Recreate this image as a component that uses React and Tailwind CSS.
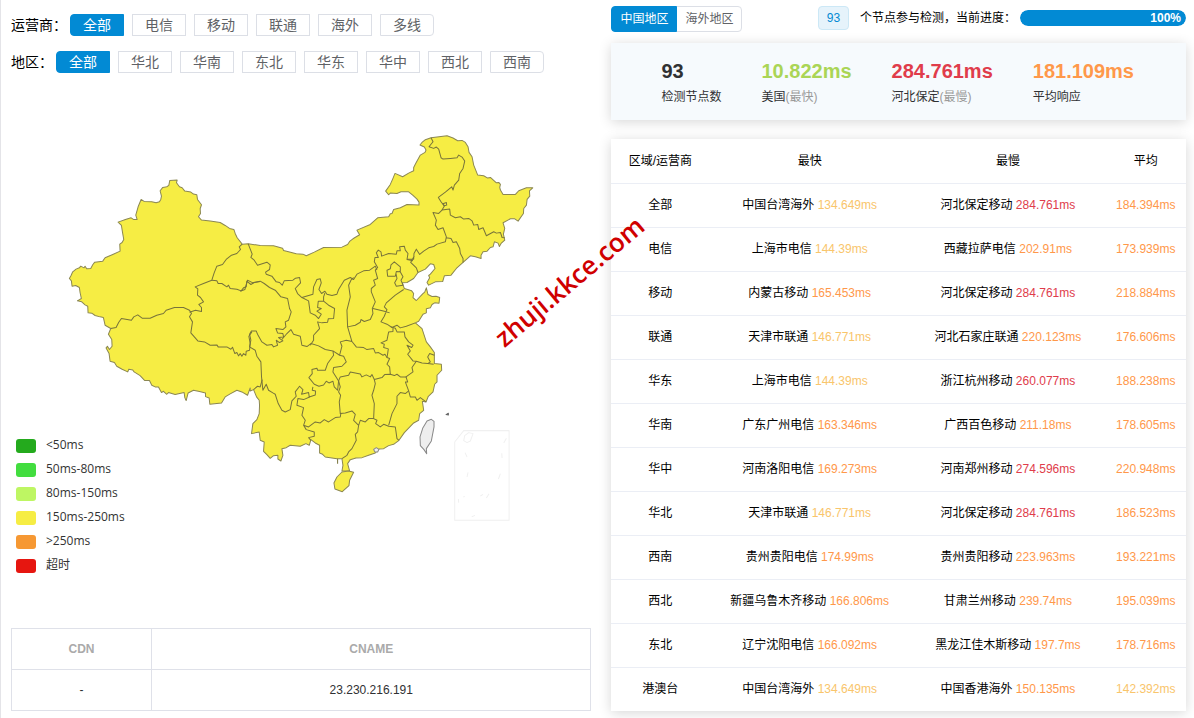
import { useState } from 'react';
import clsx from 'clsx';

const carriers = ['全部', '电信', '移动', '联通', '海外', '多线'];
const areas = ['全部', '华北', '华南', '东北', '华东', '华中', '西北', '西南'];

const legend = [
  { label: '<50ms', color: 'bg-[#24aa1d]' },
  { label: '50ms-80ms', color: 'bg-[#42dd3f]' },
  { label: '80ms-150ms', color: 'bg-[#bef663]' },
  { label: '150ms-250ms', color: 'bg-[#f6ed44]' },
  { label: '>250ms', color: 'bg-[#f69833]' },
  { label: '超时', color: 'bg-[#e61610]' },
];

const stats = [
  { value: '93', label: '检测节点数', color: 'text-[#303133]' },
  { value: '10.822ms', label: '美国', note: '(最快)', color: 'text-[#aad556]' },
  { value: '284.761ms', label: '河北保定', note: '(最慢)', color: 'text-[#e03c4b]' },
  { value: '181.109ms', label: '平均响应', color: 'text-[#ff984a]' },
];

const rows = [
  { name: '全部', fast: ['中国台湾海外', 134.649], slow: ['河北保定移动', 284.761], avg: 184.394 },
  { name: '电信', fast: ['上海市电信', 144.39], slow: ['西藏拉萨电信', 202.91], avg: 173.939 },
  { name: '移动', fast: ['内蒙古移动', 165.453], slow: ['河北保定移动', 284.761], avg: 218.884 },
  { name: '联通', fast: ['天津市联通', 146.771], slow: ['河北石家庄联通', 220.123], avg: 176.606 },
  { name: '华东', fast: ['上海市电信', 144.39], slow: ['浙江杭州移动', 260.077], avg: 188.238 },
  { name: '华南', fast: ['广东广州电信', 163.346], slow: ['广西百色移动', 211.18], avg: 178.605 },
  { name: '华中', fast: ['河南洛阳电信', 169.273], slow: ['河南郑州移动', 274.596], avg: 220.948 },
  { name: '华北', fast: ['天津市联通', 146.771], slow: ['河北保定移动', 284.761], avg: 186.523 },
  { name: '西南', fast: ['贵州贵阳电信', 174.99], slow: ['贵州贵阳移动', 223.963], avg: 193.221 },
  { name: '西北', fast: ['新疆乌鲁木齐移动', 166.806], slow: ['甘肃兰州移动', 239.74], avg: 195.039 },
  { name: '东北', fast: ['辽宁沈阳电信', 166.092], slow: ['黑龙江佳木斯移动', 197.7], avg: 178.716 },
  { name: '港澳台', fast: ['中国台湾海外', 134.649], slow: ['中国香港海外', 150.135], avg: 142.392 },
];

// Text color by response time
const getColor = (ms) => {
  if (ms < 150) return 'text-[#f9c56b]';
  if (ms < 250) return 'text-[#ff984a]';
  return 'text-[#e03c4b]';
};

function FilterRow({ title, options }) {
  const [active, setActive] = useState(options[0]);

  return (
    <div className="flex items-center gap-[3px]">
      <span className="text-sm leading-[22px] text-black">{title}：</span>
      <div className="flex gap-2">
        {options.map((option) => (
          <button
            key={option}
            type="button"
            onClick={() => setActive(option)}
            className={clsx(
              'h-[22px] w-[54px] border text-sm leading-5 first:rounded-l last:rounded-r',
              option === active
                ? 'border-[#028ad4] bg-[#028ad4] text-white'
                : 'border-[#dcdfe6] bg-white text-[#606266]'
            )}
          >
            {option}
          </button>
        ))}
      </div>
    </div>
  );
}

function ChinaMap() {
  return (
    <svg viewBox="33 219 1740 1665" className="w-full" role="img" aria-label="中国地图" strokeLinejoin="round">
      {/* Mainland outline */}
      <path
        fill="#f6ed44"
        stroke="#8b8752"
        strokeWidth="3"
        d="M208 835 213 826 218 815 228 807 238 803 242 798 252 803 255 798 260 806 272 805 278 794 284 786 308 783 315 773 338 763 360 753 359 732 366 727 371 718 367 695 364 676 354 666 376 658 393 653 400 658 411 658 407 645 414 620 423 598 432 604 455 605 468 608 478 605 482 598 484 588 480 572 488 562 500 560 506 556 509 541 531 540 529 548 538 560 546 563 554 573 572 576 580 582 590 584 592 598 604 614 600 626 601 640 595 650 604 660 630 663 660 667 675 676 688 685 701 688 705 700 711 713 726 732 744 731 780 736 820 737 847 744 850 751 865 755 888 761 908 762 918 767 942 756 970 742 1025 741 1042 733 1048 724 1058 716 1078 704 1070 690
        1110 673 1132 653 1165 650 1170 641 1175 640 1180 628 1200 623 1220 613 1256 615 1256 606 1250 597 1238 586 1225 575 1202 575 1190 580 1170 579 1165 584 1156 573 1170 553 1177 537 1184 520 1207 530 1225 519 1240 512 1240 502 1246 490 1260 465 1274 457 1277 450 1272 441 1259 435 1266 426 1275 419 1292 413 1340 407 1358 414 1372 422 1385 421 1395 427 1403 440 1406 457 1415 470 1420 495 1432 525 1450 527 1462 534 1470 532 1488 548 1495 547 1500 553 1498 562 1500 570 1508 583 1545 583 1555 572 1578 563 1597 563 1587 572 1588 588 1580 598 1578 615 1570 625 1569 640 1553 663 1543 656 1530 656 1508 668 1513 685 1509 702 1513 720 1502 730 1497 739 1493 729 1482 725 1478 740 1470 742 1460 753 1448 755 1442 765 1442 775 1425 770 1410 767 1400 776 1388 787 1368 805 1352 825 1332 827 1327 844 1305 845 1285 855 1280 847 1288 833 1285 826 1290 822 1304 805 1300 793 1290 791 1275 807 1253 817 1240 835 1220 847 1206 848 1212 865 1234 872 1240 880 1238 892 1248 901 1267 881 1273 876 1278 863 1283 883 1295 889 1307 888 1318 892 1316 909 1303 908 1295 913 1290 923 1278 926 1278 938 1268 942 1255 963
        1245 968 1265 985 1278 1025 1290 1040 1302 1057 1302 1090 1323 1092 1324 1110 1310 1125 1310 1145 1303 1152 1298 1175 1284 1188 1277 1205 1266 1203 1270 1230 1258 1240 1255 1260 1240 1268 1230 1278 1212 1297 1196 1320 1180 1332 1165 1336 1150 1345 1136 1346 1125 1358 1105 1365 1085 1372 1067 1373 1050 1378 1042 1390 1048 1412 1025 1412 1028 1395 1025 1375 1010 1375 995 1373 975 1370 967 1362 958 1358 958 1335 945 1328 932 1318 927 1335 917 1330 900 1338 870 1335 858 1342 845 1345 848 1365 842 1382 833 1376 833 1365 820 1366 810 1374 800 1363 790 1353 792 1325 780 1320 777 1295 754 1300 758 1270 770 1258 777 1240 778 1215 777 1200 769 1190 765 1180 760 1168 750 1172
        750 1163 742 1185 725 1175 710 1170 690 1181 675 1190 664 1208 629 1212 627 1193 616 1189 616 1178 598 1174 580 1170 564 1178 558 1201 554 1192 552 1177 525 1183 505 1177 500 1182 490 1173 484 1177 475 1160 465 1160 455 1155 448 1141 434 1141 420 1126 402 1115 398 1109 386 1107 383 1115 366 1107 350 1098 343 1087 330 1083 327 1060 318 1043 322 1038 328 1048 336 1038 335 1018 325 1002 332 985 315 975 310 952 300 950 285 946 275 939 264 938 263 918 255 914 245 905 232 902 244 895 240 877 238 862 227 856 216 858 214 842Z"
      />

      <g fill="none" stroke="#77733a" strokeWidth="3">
        {/* Xinjiang, Tibet, Qinghai, Gansu */}
        <g transform="translate(180 510)">
          <path d="M546 222 537 230 541 238 530 250 514 255 498 268 487 283 470 288 462 308 455 330 430 340 405 350 413 356 412 375 421 382 430 395 416 403 424 412 424 424 406 420 388 426" />
          <path d="M152 475 168 472 176 456 184 445 214 450 221 440 233 434 246 444 270 444 290 435 310 430 318 420 343 412 370 412 388 420 394 430 388 440 397 455 392 488 413 512 433 515 450 525 470 524 474 530 500 530 512 537 517 531 524 550 530 547 535 557 540 550 545 558 550 550 557 555 558 543 568 540 570 520 566 498 575 485" />
          <path d="M455 330 470 332 474 340 485 340 500 350 505 345 510 355 530 357 543 362 550 353 558 350 560 333 572 343 582 337 600 334" />
        </g>

        {/* Northwest and central provinces down to the south coast */}
        <g transform="translate(720 690)">
          <path d="M24 41 36 72 32 82 42 90 52 105 80 96 90 104 88 118 76 126 78 132 95 138 108 155 118 157 126 165 132 152 158 150 166 144 178 142 181 158 165 175 172 190 185 202 218 192 220 170 230 148 240 146 243 158 236 178 244 190 254 183 260 192 275 196 290 192 295 178 312 150 330 142 340 148 350 132 370 122 388 120 405 108 410 120" />
          <path d="M185 202 205 212 210 248 225 255 235 265 243 252 230 243 243 235 232 232 234 213 250 213 250 200 254 188M250 213 265 225 283 235 280 265 264 266 262 276 245 278 232 275 238 295 220 315 220 330 210 345" />
          <path d="M0 183 14 178 22 150 38 158 60 153 72 160 88 172 105 180 122 200 142 205 148 235 153 245 145 270 135 275 137 290 128 298 107 295 112 308 128 310 130 320 115 322 128 332 118 337 108 330 112 345 100 350 95 343 80 345 65 335 52 312 48 302 34 302 28 312 32 330 28 350 45 360 50 378 62 395 64 440 68 480 78 462 85 480 98 488 105 492 114 520 125 540 135 545 150 538 155 512 168 498 165 485 178 468 188 478 184 492 205 487 207 500 225 494 226 482 216 480 218 470" />
          <path d="M125 328 140 310 152 298 160 312 180 318 185 345 200 349 212 340 235 347 255 358 278 362 280 375 262 400 255 420 232 420 230 414 215 418 216 430 206 442 222 462 236 468 250 464 258 453 266 458 278 453 282 470 292 480 295 452 278 425 280 412 305 408 318 395 310 378 298 375 278 362" />
          <path d="M66 448 60 470 52 468 40 478M298 375 305 348 300 335 318 330 335 334 M340 142 332 150 325 165 330 200 320 240 322 290 335 334 348 350 370 352 380 358 400 355 405 368 415 367 428 375 434 372 440 382 448 385 440 402 448 410 450 432" />
          <path d="M322 290 345 285 360 276 362 268 372 274 390 268 398 250 396 235 405 215 393 185 393 175 405 165 400 150 412 145 405 120 412 112 402 95 404 82 414 82 408 68 414 60 422 65 424 78 445 70 468 72 470 62 480 62 478 50 492 48 495 60 503 70 500 88 518 92" />
          <path d="M398 235 432 243 448 248M490 178 465 195 438 218 432 230 440 238 432 258 422 275 440 282 455 292 470 285 480 293 498 288 525 278M440 120 450 116 452 104 462 95 480 110 480 125 468 124 465 138 442 138ZM478 122 488 140 482 150 488 165 468 168 463 158 470 145 467 130" />
          <path d="M458 292 458 304 445 305 440 330 422 338 432 342 430 352 444 356 442 370 440 382M452 290 465 294 470 305 492 305 494 320 505 335 518 345 514 352 500 345 510 362 502 372 518 392 528 393 545 398 562 400 570 395 562 380 568 370 582 375M562 400 580 402M528 393 515 412 518 425 497 440 502 455 495 455 505 482 510 500 525 500 530 510 540 502 557 515" />
          <path d="M295 452 300 440 325 435 330 425 360 431 365 440 378 434 390 440 395 433 402 448 425 442 433 433 450 432 462 436 470 432 480 440 500 440M402 448 405 460 400 480 395 495 402 520 400 565M505 482 495 490 480 487 470 498 470 520 455 550 445 585" />
          <path d="M295 452 300 470 295 485 301 495 297 515 300 550 315 548 335 542 345 552 340 570 355 585 360 570 375 575 385 565 400 565 410 570 406 580 420 590 430 582 445 588 465 590 470 625 476 630" />
          <path d="M208 500 190 508 173 505 170 525 190 532 185 555 195 570 190 585 205 590 225 575 240 578 252 568 265 575 285 562 300 560 302 548M190 585 198 598 222 605 222 618 205 622 212 630M355 585 352 605 345 612 348 630 335 655 325 665 320 675 305 685M292 685 292 700" />
        </g>

        {/* Northeast */}
        <g transform="translate(1110 375)">
          <path d="M182 38 188 50 176 65 190 70 198 66 205 72 212 98 218 102 240 100 260 98 265 90 275 96 283 108 278 130 268 145 265 165 252 180 248 195 244 185 225 201 204 217 212 230 222 243 215 255 238 252 240 270 255 278 270 275 280 282 295 280 305 287 310 300 322 298 325 313 338 308 348 332 370 320 378 324 390 322 395 337 403 338" />
          <path d="M218 236 228 232 229 240 222 242ZM215 255 205 265 188 262 198 285 195 300 203 313 218 308 228 335 225 350 200 357 190 364 175 368 160 378 148 388 138 372 131 385 130 402 110 402M132 392 121 412 138 428 143 442M228 338 242 340 248 352 258 350 268 370 270 385 278 400 278 412" />
        </g>
      </g>

      {/* Hainan, Taiwan, Hong Kong */}
      <g stroke="#8b8752" strokeWidth="3">
        <path fill="#f6ed44" d="M1025 1415 1045 1412 1060 1416 1048 1440 1046 1456 1026 1474 1004 1466 1001 1448 1010 1430Z" />
        <path fill="#eee" stroke="#888" d="M1293 1257 1301 1263 1301 1280 1293 1322 1278 1345 1279 1360 1271 1348 1260 1336 1259 1310 1267 1284 1280 1262Z" />
        <path fill="#eee" stroke="#888" d="M1120 1347 1128 1342 1136 1347 1132 1355 1123 1354Z" />
        <path fill="#666" stroke="#666" d="M1337 1243 1344 1239 1344 1244Z" />
      </g>

      {/* South China Sea inset */}
      <g transform="translate(1200 1140)" fill="none" stroke="#f0f0f0" strokeWidth="3">
        <path d="M190 151H326V420H163V185Z" />
        <path d="M193 166 205 157 218 160 210 182 200 187 190 181ZM318 174 310 188M304 219 305 233M300 280 294 296M266 340 258 353M248 342 240 347M224 405 214 409M174 356 175 367M203 276 200 290M194 217 200 230M189 350 193 348" />
      </g>
    </svg>
  );
}

function Target({ item }) {
  const [name, ms] = item;
  return (
    <>
      {name} <span className={getColor(ms)}>{ms}ms</span>
    </>
  );
}

function LeftPanel() {
  return (
    <section className="px-2.5 pt-3.5">
      <div className="flex flex-col gap-[15px]">
        <FilterRow title="运营商" options={carriers} />
        <FilterRow title="地区" options={areas} />
      </div>

      <div className="relative">
        <ChinaMap />
        <ul className="absolute bottom-[50px] left-[5px] font-['Open_Sans','Noto_Sans_CJK_SC',sans-serif] text-xs text-[#333]">
          {legend.map((item) => (
            <li key={item.label} className="flex h-6 items-center gap-2.5">
              <span className={clsx('h-3.5 w-5 rounded-[3px]', item.color)} />
              <span className="pb-0.5">{item.label}</span>
            </li>
          ))}
        </ul>
      </div>

      <table className="w-full table-fixed border-collapse text-center text-xs">
        <thead>
          <tr className="h-[41px] text-[#aaa]">
            <th className="w-[140px] border border-[#dfe1e9] font-bold">CDN</th>
            <th className="border border-[#dfe1e9] font-bold">CNAME</th>
          </tr>
        </thead>
        <tbody>
          <tr className="h-[41px] text-[#303133]">
            <td className="border border-[#dfe1e9]">-</td>
            <td className="border border-[#dfe1e9]">23.230.216.191</td>
          </tr>
        </tbody>
      </table>
    </section>
  );
}

function RightPanel() {
  const [region, setRegion] = useState('中国地区');
  const progress = 100;

  return (
    <section className="pt-1.5 pr-2 pb-1.5 pl-2.5 text-xs">
      <div className="flex items-start">
        <div className="flex -space-x-px">
          {['中国地区', '海外地区'].map((name) => (
            <button
              key={name}
              type="button"
              onClick={() => setRegion(name)}
              className={clsx(
                'h-[26px] w-[66px] border first:rounded-l last:rounded-r',
                region === name
                  ? 'relative border-[#028ad4] bg-[#028ad4] text-white'
                  : 'border-[#dcdfe6] bg-white text-[#606266]'
              )}
            >
              {name}
            </button>
          ))}
        </div>
        <div className="ml-auto flex h-6 items-center">
          <span className="flex h-6 w-[31px] items-center justify-center rounded border border-[#cce8f6] bg-[#e6f3fb] text-[#028ad4]">
            93
          </span>
          <span className="ml-[11px] whitespace-nowrap text-black">个节点参与检测，当前进度：</span>
          <div className="ml-1 h-4 w-[166px] overflow-hidden rounded-full bg-[#ebeef5]">
            <div
              className="h-4 rounded-full bg-[#028ad4] pr-[5px] text-right leading-4 font-bold text-white"
              style={{ width: `${progress}%` }}
            >
              {progress}%
            </div>
          </div>
        </div>
      </div>

      <div className="mt-[11px] flex h-[77px] gap-10 bg-[#f6fafd] pt-[13px] pl-[50px] shadow-[0_2px_12px_rgba(0,0,0,0.16)]">
        {stats.map((item) => (
          <div key={item.label}>
            <p className={clsx('text-xl leading-[30px] font-bold', item.color)}>{item.value}</p>
            <p className="leading-[22px] text-[#303133]">
              {item.label}
              {item.note && <span className="text-[#999]">{item.note}</span>}
            </p>
          </div>
        ))}
      </div>

      <div className="mt-[19px] shadow-[0_2px_12px_rgba(0,0,0,0.16)]">
        <table className="w-full table-fixed border-collapse bg-white text-center text-black">
          <thead>
            <tr className="h-11 border-b border-[#ebeef5]">
              <th className="w-[17%] font-normal">区域/运营商</th>
              <th className="w-[35%] font-normal">最快</th>
              <th className="w-[34%] font-normal">最慢</th>
              <th className="w-[14%] font-normal">平均</th>
            </tr>
          </thead>
          <tbody>
            {rows.map((row) => (
              <tr key={row.name} className="h-11 border-b border-[#ebeef5] last:border-0">
                <td>{row.name}</td>
                <td><Target item={row.fast} /></td>
                <td><Target item={row.slow} /></td>
                <td className={getColor(row.avg)}>{row.avg}ms</td>
              </tr>
            ))}
          </tbody>
        </table>
      </div>
    </section>
  );
}

export default function App() {
  return (
    <main className="relative grid min-h-screen grid-cols-[601fr_593fr] overflow-hidden border-l border-[#e4e4e8] bg-white font-['Liberation_Sans','Noto_Sans_CJK_SC',sans-serif]">
      <LeftPanel />
      <RightPanel />
      {/* Watermark */}
      <span className="pointer-events-none absolute top-[281px] left-[568px] -translate-x-1/2 -translate-y-1/2 -rotate-40 font-['Open_Sans',sans-serif] text-[26px] leading-8 font-semibold whitespace-nowrap text-[#d00000]">
        zhuji.kkce.com
      </span>
    </main>
  );
}
